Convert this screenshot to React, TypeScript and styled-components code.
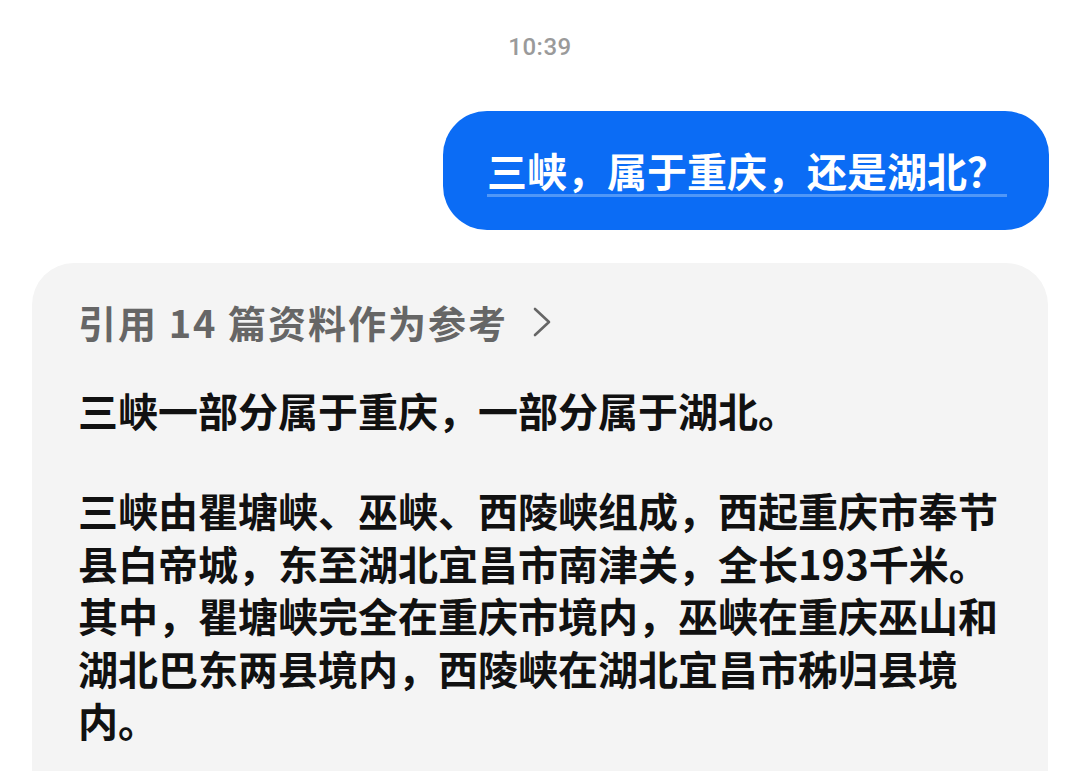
import styled, { createGlobalStyle } from "styled-components";

const GlobalStyle = createGlobalStyle`
  html, body {
    margin: 0;
    padding: 0;
    background: #ffffff;
  }
  body {
    font-family: "Noto Sans CJK SC", "Noto Sans", sans-serif;
    overflow: hidden;
  }
`;

const Page = styled.div`
  width: 1080px;
  height: 771px;
  display: flex;
  flex-direction: column;
  overflow: hidden;
`;

const Time = styled.div`
  padding-top: 32px;
  text-align: center;
  font-family: Roboto, "Noto Sans", sans-serif;
  font-weight: 500;
  font-size: 24px;
  line-height: 30px;
  letter-spacing: 0.5px;
  color: #9a9a9a;
`;

const OutRow = styled.div`
  display: flex;
  justify-content: flex-end;
  padding-right: 31px;
  margin-top: 49px;
`;

const Bubble = styled.div`
  background: #0b6cf5;
  border-radius: 44px;
  padding: 31px 42px 32px 44px;
  color: #ffffff;
  font-weight: 700;
  font-size: 40px;
  line-height: 56px;
`;

const Question = styled.span`
  text-decoration: underline;
  text-decoration-color: #5097f7;
  text-decoration-thickness: 3px;
  text-underline-offset: 7px;
`;

const Card = styled.div`
  margin: 33px 32px 0 32px;
  background: #f4f4f4;
  border-radius: 42px 42px 0 0;
  padding: 36px 46px 0 46px;
  flex: 1;
`;

const Sources = styled.div`
  display: flex;
  align-items: center;
  gap: 24px;
  font-weight: 700;
  font-size: 38px;
  line-height: 46px;
  letter-spacing: 2px;
  color: #666666;
`;

const Chevron = styled.svg`
  width: 20px;
  height: 32px;
  flex-shrink: 0;
`;

const Lead = styled.p`
  margin: 39px 0 0 0;
  font-weight: 700;
  font-size: 40px;
  line-height: 52px;
  color: #111111;
`;

const Body = styled.p`
  margin: 48px 0 0 0;
  width: 924px;
  font-weight: 700;
  font-size: 40px;
  line-height: 52.5px;
  color: #111111;
`;

export default function App() {
  return (
    <Page>
      <GlobalStyle />
      <Time>10:39</Time>
      <OutRow>
        <Bubble>
          <Question>三峡，属于重庆，还是湖北？</Question>
        </Bubble>
      </OutRow>
      <Card>
        <Sources>
          <span>引用 14 篇资料作为参考</span>
          <Chevron viewBox="0 0 20 32">
            <polyline
              points="3,3 17,16 3,29"
              fill="none"
              stroke="#666666"
              strokeWidth="2.6"
              strokeLinecap="round"
              strokeLinejoin="round"
            />
          </Chevron>
        </Sources>
        <Lead>三峡一部分属于重庆，一部分属于湖北。</Lead>
        <Body>
          三峡由瞿塘峡、巫峡、西陵峡组成，西起重庆市奉节县白帝城，东至湖北宜昌市南津关，全长193千米。其中，瞿塘峡完全在重庆市境内，巫峡在重庆巫山和湖北巴东两县境内，西陵峡在湖北宜昌市秭归县境内。
        </Body>
      </Card>
    </Page>
  );
}
